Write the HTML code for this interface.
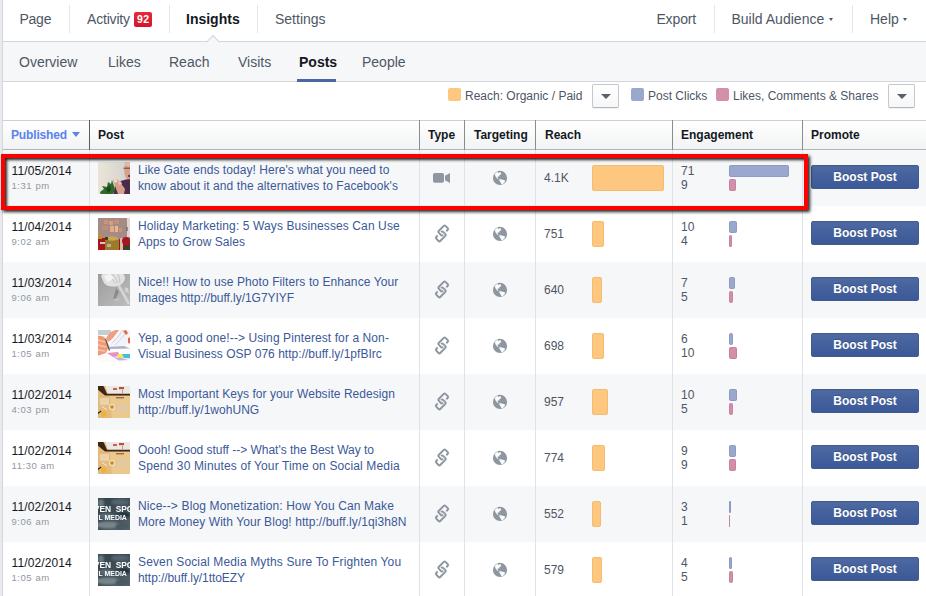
<!DOCTYPE html>
<html><head><meta charset="utf-8">
<style>
*{box-sizing:border-box;margin:0;padding:0}
html,body{width:926px;height:596px;overflow:hidden;background:#e9eaed;font-family:"Liberation Sans",Arial,sans-serif;}
.abs{position:absolute}
#wrap{position:absolute;left:2px;top:0;width:924px;height:596px;background:#fff;border-left:1px solid #d3d6db}
#page{position:absolute;left:0;top:0;width:926px;height:596px}
.nav{position:absolute;top:0;height:41px;line-height:38px;font-size:14px;color:#4e5665;white-space:nowrap}
.sep{position:absolute;top:5px;width:1px;height:28px;background:#e5e6e9}
.sub{position:absolute;top:43px;height:39px;line-height:39px;font-size:14px;color:#4e5665;white-space:nowrap}
.hd{position:absolute;top:122px;height:28px;line-height:27px;font-size:12px;font-weight:bold;color:#141823;white-space:nowrap}
.vl{position:absolute;width:1px;background:#e1e2e6}
.row{position:absolute;left:3px;width:923px;height:56px}
.row.odd{background:#f6f7f8}
.date{position:absolute;left:8.5px;top:14px;font-size:12px;line-height:14px;color:#141823;white-space:nowrap;letter-spacing:.12px}
.time{position:absolute;left:8.5px;top:30px;font-size:9.5px;line-height:12px;color:#9197a3;white-space:nowrap;letter-spacing:.55px}
.thumb{position:absolute;left:95px;top:12px;width:32px;height:32px;overflow:hidden}
.txt{position:absolute;left:135px;top:12px;font-size:12px;line-height:16px;color:#3b5998;white-space:nowrap}
.reach{position:absolute;left:541px;top:21px;font-size:12px;line-height:14px;color:#4e5665}
.obar{position:absolute;left:589px;top:15px;height:26px;background:#fdc780;border:1px solid #f6bc6e;border-radius:2px}
.eng{position:absolute;left:678px;top:14px;font-size:12px;line-height:14px;color:#4e5665}
.bbar{position:absolute;left:726px;top:15px;height:12px;background:#9ba8cd;border-radius:2px;box-shadow:inset 0 0 0 1px rgba(40,60,120,.12)}
.pbar{position:absolute;left:726px;top:29px;height:12px;background:#d48fa9;border-radius:2px;box-shadow:inset 0 0 0 1px rgba(120,30,70,.12)}
.btn{position:absolute;left:808px;top:15px;width:108px;height:24px;border:1px solid #435a8b;border-radius:2px;background:linear-gradient(#4e69a2,#3b5998);color:#fff;font-weight:bold;font-size:12px;line-height:22px;text-align:center;text-shadow:0 -1px 0 rgba(0,0,0,.2)}
.ico{position:absolute}
.lg{position:absolute;top:89px;font-size:12px;line-height:14px;color:#4e5665;white-space:nowrap}
.dd{position:absolute;top:84px;width:27px;height:24px;border:1px solid #c6c7ca;border-bottom-color:#b4b5b8;border-radius:2px;background:linear-gradient(#fff,#f6f7f8);box-shadow:0 1px 0 rgba(0,0,0,.05)}
.dd i{position:absolute;left:7.6px;top:9px;width:0;height:0;border-left:5px solid transparent;border-right:5px solid transparent;border-top:5.5px solid #596070}
</style></head><body>
<svg width="0" height="0" style="position:absolute"><defs>
<filter id="bl" x="-10%" y="-10%" width="120%" height="120%"><feGaussianBlur stdDeviation="0.7"/></filter>
<filter id="bl2" x="-10%" y="-10%" width="120%" height="120%"><feGaussianBlur stdDeviation="1.1"/></filter>
<linearGradient id="g1" x1="0" x2="1" y1="0" y2="0"><stop offset="0" stop-color="#ebe5d8"/><stop offset="1" stop-color="#d3d1cd"/></linearGradient>
<g id="t1"><rect width="32" height="32" fill="url(#g1)"/><g filter="url(#bl)">
<ellipse cx="30.5" cy="8" rx="4.3" ry="10" fill="#d6a08a"/>
<ellipse cx="30.5" cy="1.5" rx="3.5" ry="3" fill="#e4b8a2"/>
<rect x="25.5" y="5.6" width="6.5" height="1.3" fill="#6e5e5c"/>
<ellipse cx="31.5" cy="14" rx="1.4" ry="1.2" fill="#5a3030"/>
<path d="M15 33 L17 24 Q22 17 33 17 V33 Z" fill="#4b2c4c"/>
<path d="M15 18 Q19 16 22 20 L27 27 L26 32 L20 32 Q17 24 15 18 Z" fill="#d7a08a"/>
<path d="M15.5 17.5 L18 17.5 L19.5 20 L17 20.5Z" fill="#f4e4dc"/>
<path d="M20 20 L23 19.5 L24 22 L21 23Z" fill="#e8c0b0"/>
<path d="M2 30 L6 27 L4 24 L9 25 L10 20 L13 22 L14 18 L16 24 L17 28 L14 33 L3 33 Z" fill="#2d6a2b"/>
<path d="M8 27 L12 23 L13 28 L10 31Z" fill="#1c4a1a"/>
</g></g>
<g id="t2"><rect width="32" height="32" fill="#a68a84"/><g filter="url(#bl)">
<rect x="29" y="0" width="4" height="19" fill="#ddd6d2"/><rect x="28.5" y="9" width="1" height="4" fill="#5a4a48"/>
<rect x="6" y="2" width="4" height="4" fill="#c9957a"/><rect x="11" y="3" width="4" height="4" fill="#d6a080"/><rect x="16" y="2" width="5" height="4" fill="#c4907a"/>
<rect x="4" y="8" width="6" height="4" fill="#bf8c74"/><rect x="12" y="8" width="4" height="6" fill="#e4ac86"/><rect x="17" y="8" width="3" height="6" fill="#eab890"/><rect x="21" y="10" width="3" height="4" fill="#c8957a"/>
<rect x="-1" y="20" width="9" height="13" fill="#a8141a"/><rect x="-1" y="16" width="5" height="5" fill="#b89038"/>
<rect x="7" y="22" width="14" height="11" fill="#9c7a2a"/><ellipse cx="14" cy="20.5" rx="6" ry="2.2" fill="#c8a850"/>
<rect x="7" y="19" width="3" height="3" fill="#4a3a20"/>
<rect x="21" y="21" width="12" height="12" fill="#98141c"/><rect x="22" y="20" width="3" height="12" fill="#d8bcb4"/><circle cx="28" cy="23" r="4" fill="#a81522"/><path d="M26 28 L33 27 V33 H27Z" fill="#2a4a2a"/>
<rect x="9" y="26" width="4" height="3" fill="#b8b0a0"/><rect x="2" y="24" width="5" height="2" fill="#d0c8c0"/>
</g></g>
<linearGradient id="g3" x1="0" x2="1" y1="0" y2="1"><stop offset="0" stop-color="#9c9c9c"/><stop offset="1" stop-color="#bdbdbd"/></linearGradient>
<g id="t3"><rect width="32" height="32" fill="url(#g3)"/><g filter="url(#bl)">
<path d="M3 2 Q6 -3 16 -2 Q27 -3 27 4 Q26 10 20 12 Q10 14 6 9 Z" fill="#e2e2e2"/>
<path d="M8 1 Q14 3 18 10 M14 0 Q18 4 20 9 M20 0 Q22 4 22 9" stroke="#c4c4c4" stroke-width="1" fill="none"/>
<path d="M6 3 Q8 0 12 0 L16 4 L10 8Z" fill="#f4f4f4"/>
<path d="M19 11 L22 11 L32 29 L30 31 Z" fill="#d6d6d6"/>
<path d="M18 14 L21 18 L17 26 L15 26 Z" fill="#8a8a8a"/>
<path d="M15 25 L22 24 L20 27 L16 27Z" fill="#c0c0c0"/>
<path d="M26.5 13.5 L30 14 L31 19 L27 18Z" fill="#d2d2d2"/>
</g></g>
<g id="t4"><rect width="32" height="32" fill="#fbfbfc"/><g filter="url(#bl)">
<rect x="-1" y="-1" width="14" height="6" fill="#c6ced4"/>
<path d="M-1 6 Q5 5 8 9 L11 16 L8 23 L-1 26 Z" fill="#ee9a78"/>
<path d="M0 10 L7 12 M0 15 L8 17 M0 20 L7 21" stroke="#f8c4a8" stroke-width="1.6"/>
<path d="M8 8 Q12 0 22 -1 L18 4 Q14 10 10 12 Z" fill="#eea080"/>
<path d="M10 16 Q18 8 24 -1 L34 -1 L34 6 Q28 16 24 18 Q16 18 10 18 Z" fill="#f2f2f7"/>
<path d="M14 13 Q20 8 25 0 M17 15 Q24 9 28 2" stroke="#c8cce0" stroke-width=".8" fill="none"/>
<path d="M10 17 L26 16 L32 18.5 L12 19Z" fill="#aab2ca"/>
<path d="M25 1 L28 0 L30 3 L28 5Z M30 8 L33 7 L33 14 L30 13Z" fill="#e46a4a"/>
<path d="M7 9 L8 9 L12 20 L11 21Z" fill="#5a4a48"/>
<path d="M9 23 L20 22 L22 26 L15 27 Z" fill="#e890c0"/>
<path d="M19 24.5 L25 24 L26 28 L21 28.5Z" fill="#f2ea50"/>
<path d="M24 24 L34 24 L34 28.5 L26 28Z" fill="#48bce6"/>
<path d="M15 27 L24 28 L30 30 L21 30.5Z" fill="#c4b0e0"/>
</g></g>
<g id="t5"><rect width="32" height="32" fill="#e4ba7a"/><g filter="url(#bl)">
<path d="M12 10 H33 V33 H14 Z" fill="#ebc88e"/>
<path d="M7 -1 H33 V8.6 H10 Z" fill="#ebe7e3"/>
<path d="M-1 -1 H5 L9 7.8 H33 V9.6 H7 L-1 3 Z" fill="#3c2619"/>
<rect x="15" y="2" width="4" height="2" fill="#c8644a"/><rect x="21" y="1" width="5" height="2.2" fill="#b8503a"/><rect x="24" y="4" width="1" height="3" fill="#d89078"/>
<rect x="2" y="12" width="9" height="7" fill="#ead2ac"/>
<rect x="18" y="11" width="8" height="1.4" fill="#9a6a40"/>
<circle cx="14" cy="21" r="3.2" fill="#f1dab4"/><circle cx="14" cy="21" r="1.7" fill="#c88428"/>
<rect x="17.5" y="18.5" width="13" height="6" rx="1" fill="#e2c8a4"/>
<path d="M3 26 L7.5 25 L8.5 30 L4 31.5Z" fill="#e9b538"/>
<path d="M-1 27 L3 24.5 L3.5 25.5 L-1 29Z" fill="#3a2a20"/>
<path d="M4 20 L9 23 L8.5 24 L3.5 21Z" fill="#f0e0c0"/>
</g></g>
<linearGradient id="g6" x1="0" x2="1" y1="0" y2="1"><stop offset="0" stop-color="#33434c"/><stop offset=".5" stop-color="#3e4d56"/><stop offset="1" stop-color="#56646c"/></linearGradient>
<g id="t6"><rect width="32" height="32" fill="url(#g6)"/><g filter="url(#bl2)">
<ellipse cx="22" cy="4" rx="9" ry="3" fill="#55656e"/><ellipse cx="3" cy="5" rx="3" ry="4" fill="#6a7a80"/>
<ellipse cx="10" cy="27" rx="12" ry="3.5" fill="#78868c"/><ellipse cx="8" cy="18" rx="8" ry="3" fill="#5a6a72"/><ellipse cx="26" cy="17" rx="6" ry="3" fill="#26343c"/><ellipse cx="24" cy="28" rx="7" ry="3" fill="#4a5860"/>
</g>
<g filter="url(#bl3)"><text x="-4.2" y="14.2" font-family="Liberation Sans, Arial, sans-serif" font-weight="bold" font-size="8.4" fill="#fff" xml:space="preserve">VEN  SPOO</text>
<text x="0.6" y="22.3" font-family="Liberation Sans, Arial, sans-serif" font-weight="bold" font-size="6.9" fill="#fff" xml:space="preserve">L MEDIA</text></g></g>
<filter id="bl3" x="-10%" y="-10%" width="120%" height="120%"><feGaussianBlur stdDeviation="0.25"/></filter>
<g id="video" fill="#8e96a1"><rect x="3" y="7" width="11" height="9.8" rx="1.8"/><path d="M15 9.7 L20 7 V17 L15 14.2 Z"/></g>
<g id="globe"><circle cx="12" cy="11.9" r="7.05" fill="#8e96a1"/><path d="M6.6 8 L9.6 5.6 L10.6 7 L12.6 6.1 L13.2 8 L11.2 9.5 L11.6 10.6 L9.6 10.6 L9.6 11.8 L10.6 12.8 L9.2 12.8 L7.6 10.6 Z M10.8 13.6 L13 13.2 L16.6 14.2 L17.1 15.4 L15.2 17.8 L13.6 18.4 L12.6 16.4 Z" fill="#fafbfb"/></g>
<g id="link" fill="none" stroke="#8e96a1" stroke-width="2" stroke-linecap="butt">
<path id="lk" d="M1.6 2.8 H3.6 Q4.8 2.8 4.8 1.6 V-1.6 Q4.8 -2.8 3.6 -2.8 H-3.6 Q-4.8 -2.8 -4.8 -1.6 V1.6 Q-4.8 2.8 -3.6 2.8 H-3.2" transform="translate(13.2 9.4) rotate(-45)"/>
<path d="M1.6 2.8 H3.6 Q4.8 2.8 4.8 1.6 V-1.6 Q4.8 -2.8 3.6 -2.8 H-3.6 Q-4.8 -2.8 -4.8 -1.6 V1.6 Q-4.8 2.8 -3.6 2.8 H-3.2" transform="translate(10.8 15.4) rotate(135)"/>
</g>
</defs></svg>
<div id="wrap"></div>
<div id="page">
<!-- top nav -->
<div class="abs" style="left:3px;top:41px;width:923px;height:1px;background:#d3d6db"></div>
<div class="nav" style="left:19.5px;letter-spacing:-.25px">Page</div>
<div class="sep" style="left:69px"></div>
<div class="nav" style="left:87px;letter-spacing:-.18px">Activity</div>
<div class="abs" style="left:134px;top:12px;width:18px;height:15px;border-radius:2px;background:linear-gradient(#e6293b,#d3152a);color:#fff;font-size:10.5px;font-weight:bold;line-height:15px;text-align:center;letter-spacing:.4px;padding-left:.4px">92</div>
<div class="sep" style="left:169px"></div>
<div class="nav" style="left:186px;font-weight:bold;color:#141823">Insights</div>
<div class="sep" style="left:257px"></div>
<div class="nav" style="left:275px">Settings</div>
<div class="nav" style="left:656.4px;letter-spacing:-.12px">Export</div>
<div class="sep" style="left:714px"></div>
<div class="nav" style="left:731.4px;letter-spacing:.02px">Build Audience</div>
<div class="sep" style="left:852px"></div>
<div class="nav" style="left:870px">Help</div>
<div class="abs" style="left:828.8px;top:18.2px;width:0;height:0;border-left:2.8px solid transparent;border-right:2.8px solid transparent;border-top:3.6px solid #4e5665"></div>
<div class="abs" style="left:903.1px;top:18.2px;width:0;height:0;border-left:2.8px solid transparent;border-right:2.8px solid transparent;border-top:3.6px solid #4e5665"></div>
<!-- sub nav -->
<div class="abs" style="left:3px;top:42px;width:923px;height:39px;background:#f6f7f8"></div>
<div class="abs" style="left:3px;top:81px;width:923px;height:1px;background:#d3d6db"></div>
<div class="abs" style="left:208px;top:36.6px;width:10px;height:10px;transform:rotate(45deg);background:#f6f7f8;border-left:1px solid #d3d6db;border-top:1px solid #d3d6db"></div>
<div class="sub" style="left:19px">Overview</div>
<div class="sub" style="left:108px">Likes</div>
<div class="sub" style="left:169px">Reach</div>
<div class="sub" style="left:238px">Visits</div>
<div class="sub" style="left:299px;font-weight:bold;color:#141823">Posts</div>
<div class="abs" style="left:297px;top:79px;width:39px;height:3px;background:#4b67a1"></div>
<div class="sub" style="left:362px">People</div>
<!-- legend -->
<div class="abs" style="left:448px;top:88px;width:13px;height:13px;border-radius:2px;background:#fdc780"></div>
<div class="lg" style="left:465px">Reach: Organic / Paid</div>
<div class="dd" style="left:592px"><i></i></div>
<div class="abs" style="left:631px;top:88px;width:13px;height:13px;border-radius:2px;background:#9ba8cd"></div>
<div class="lg" style="left:648px">Post Clicks</div>
<div class="abs" style="left:716px;top:88px;width:13px;height:13px;border-radius:2px;background:#d48fa9"></div>
<div class="lg" style="left:733px">Likes, Comments &amp; Shares</div>
<div class="dd" style="left:888px"><i></i></div>
<!-- header -->
<div class="abs" style="left:3px;top:120px;width:923px;height:30px;background:linear-gradient(#fff,#f2f3f4);border-top:1px solid #cfcfcf;border-bottom:1px solid #b5b5b5"></div>
<div class="hd" style="left:11px;color:#5a82f0;letter-spacing:-.15px">Published</div>
<div class="abs" style="left:72px;top:132px;width:0;height:0;border-left:4px solid transparent;border-right:4px solid transparent;border-top:5px solid #5a82f0"></div>
<div class="hd" style="left:98px">Post</div>
<div class="hd" style="left:428px">Type</div>
<div class="hd" style="left:474px">Targeting</div>
<div class="hd" style="left:545px">Reach</div>
<div class="hd" style="left:681px">Engagement</div>
<div class="hd" style="left:811px">Promote</div>

<div class="row odd" style="top:150px">
<div class="date">11/05/2014</div><div class="time">1:31 pm</div>
<svg class="thumb" width="32" height="32" viewBox="0 0 32 32"><use href="#t1"/></svg>
<div class="txt"><span style="letter-spacing:0.052px">Like Gate ends today! Here's what you need to</span><br><span style="letter-spacing:0.075px">know about it and the alternatives to Facebook's</span></div>
<svg class="ico" style="left:427px;top:16px" width="24" height="24"><use href="#video"/></svg>
<svg class="ico" style="left:485px;top:16px" width="24" height="24"><use href="#globe"/></svg>
<div class="reach">4.1K</div><div class="obar" style="width:72px"></div>
<div class="eng">71<br>9</div><div class="bbar" style="width:60px"></div><div class="pbar" style="width:7px"></div>
<div class="btn">Boost Post</div>
</div>
<div class="row" style="top:206px">
<div class="date">11/04/2014</div><div class="time">9:02 am</div>
<svg class="thumb" width="32" height="32" viewBox="0 0 32 32"><use href="#t2"/></svg>
<div class="txt"><span style="letter-spacing:0.109px">Holiday Marketing: 5 Ways Businesses Can Use</span><br><span style="letter-spacing:0.055px">Apps to Grow Sales</span></div>
<svg class="ico" style="left:427px;top:15px" width="24" height="24"><use href="#link"/></svg>
<svg class="ico" style="left:485px;top:16px" width="24" height="24"><use href="#globe"/></svg>
<div class="reach">751</div><div class="obar" style="width:12px"></div>
<div class="eng">10<br>4</div><div class="bbar" style="width:8px"></div><div class="pbar" style="width:3px"></div>
<div class="btn">Boost Post</div>
</div>
<div class="row odd" style="top:262px">
<div class="date">11/03/2014</div><div class="time">9:06 am</div>
<svg class="thumb" width="32" height="32" viewBox="0 0 32 32"><use href="#t3"/></svg>
<div class="txt"><span style="letter-spacing:0.088px">Nice!! How to use Photo Filters to Enhance Your</span><br><span style="letter-spacing:-0.039px">Images http://buff.ly/1G7YIYF</span></div>
<svg class="ico" style="left:427px;top:15px" width="24" height="24"><use href="#link"/></svg>
<svg class="ico" style="left:485px;top:16px" width="24" height="24"><use href="#globe"/></svg>
<div class="reach">640</div><div class="obar" style="width:10px"></div>
<div class="eng">7<br>5</div><div class="bbar" style="width:6px"></div><div class="pbar" style="width:4px"></div>
<div class="btn">Boost Post</div>
</div>
<div class="row" style="top:318px">
<div class="date">11/03/2014</div><div class="time">1:05 am</div>
<svg class="thumb" width="32" height="32" viewBox="0 0 32 32"><use href="#t4"/></svg>
<div class="txt"><span style="letter-spacing:0.093px">Yep, a good one!--&gt; Using Pinterest for a Non-</span><br><span style="letter-spacing:0.022px">Visual Business OSP 076 http://buff.ly/1pfBIrc</span></div>
<svg class="ico" style="left:427px;top:15px" width="24" height="24"><use href="#link"/></svg>
<svg class="ico" style="left:485px;top:16px" width="24" height="24"><use href="#globe"/></svg>
<div class="reach">698</div><div class="obar" style="width:12px"></div>
<div class="eng">6<br>10</div><div class="bbar" style="width:4px"></div><div class="pbar" style="width:8px"></div>
<div class="btn">Boost Post</div>
</div>
<div class="row odd" style="top:374px">
<div class="date">11/02/2014</div><div class="time">4:03 pm</div>
<svg class="thumb" width="32" height="32" viewBox="0 0 32 32"><use href="#t5"/></svg>
<div class="txt"><span style="letter-spacing:0.055px">Most Important Keys for your Website Redesign</span><br><span style="letter-spacing:0.033px">http://buff.ly/1wohUNG</span></div>
<svg class="ico" style="left:427px;top:15px" width="24" height="24"><use href="#link"/></svg>
<svg class="ico" style="left:485px;top:16px" width="24" height="24"><use href="#globe"/></svg>
<div class="reach">957</div><div class="obar" style="width:16px"></div>
<div class="eng">10<br>5</div><div class="bbar" style="width:8px"></div><div class="pbar" style="width:4px"></div>
<div class="btn">Boost Post</div>
</div>
<div class="row" style="top:430px">
<div class="date">11/02/2014</div><div class="time">11:30 am</div>
<svg class="thumb" width="32" height="32" viewBox="0 0 32 32"><use href="#t5"/></svg>
<div class="txt"><span style="letter-spacing:-0.017px">Oooh! Good stuff --&gt; What's the Best Way to</span><br><span style="letter-spacing:0.139px">Spend 30 Minutes of Your Time on Social Media</span></div>
<svg class="ico" style="left:427px;top:15px" width="24" height="24"><use href="#link"/></svg>
<svg class="ico" style="left:485px;top:16px" width="24" height="24"><use href="#globe"/></svg>
<div class="reach">774</div><div class="obar" style="width:13px"></div>
<div class="eng">9<br>9</div><div class="bbar" style="width:7px"></div><div class="pbar" style="width:7px"></div>
<div class="btn">Boost Post</div>
</div>
<div class="row odd" style="top:486px">
<div class="date">11/02/2014</div><div class="time">9:06 am</div>
<svg class="thumb" width="32" height="32" viewBox="0 0 32 32"><use href="#t6"/></svg>
<div class="txt"><span style="letter-spacing:0.145px">Nice--&gt; Blog Monetization: How You Can Make</span><br><span style="letter-spacing:0.065px">More Money With Your Blog! http://buff.ly/1qi3h8N</span></div>
<svg class="ico" style="left:427px;top:15px" width="24" height="24"><use href="#link"/></svg>
<svg class="ico" style="left:485px;top:16px" width="24" height="24"><use href="#globe"/></svg>
<div class="reach">552</div><div class="obar" style="width:9px"></div>
<div class="eng">3<br>1</div><div class="bbar" style="width:2px"></div><div class="pbar" style="width:1px"></div>
<div class="btn">Boost Post</div>
</div>
<div class="row" style="top:542px">
<div class="date">11/02/2014</div><div class="time">1:05 am</div>
<svg class="thumb" width="32" height="32" viewBox="0 0 32 32"><use href="#t6"/></svg>
<div class="txt"><span style="letter-spacing:0.148px">Seven Social Media Myths Sure To Frighten You</span><br><span style="letter-spacing:-0.072px">http://buff.ly/1ttoEZY</span></div>
<svg class="ico" style="left:427px;top:15px" width="24" height="24"><use href="#link"/></svg>
<svg class="ico" style="left:485px;top:16px" width="24" height="24"><use href="#globe"/></svg>
<div class="reach">579</div><div class="obar" style="width:10px"></div>
<div class="eng">4<br>5</div><div class="bbar" style="width:3px"></div><div class="pbar" style="width:4px"></div>
<div class="btn">Boost Post</div>
</div>
<div class="vl" style="left:89px;top:150px;height:446px"></div>
<div class="vl" style="left:89px;top:120px;height:30px;background:#5c5c5c"></div>
<div class="vl" style="left:419px;top:150px;height:446px"></div>
<div class="vl" style="left:419px;top:120px;height:30px;background:#8c8c8c"></div>
<div class="vl" style="left:464px;top:150px;height:446px"></div>
<div class="vl" style="left:464px;top:120px;height:30px;background:#8c8c8c"></div>
<div class="vl" style="left:535px;top:150px;height:446px"></div>
<div class="vl" style="left:535px;top:120px;height:30px;background:#8c8c8c"></div>
<div class="vl" style="left:672px;top:150px;height:446px"></div>
<div class="vl" style="left:672px;top:120px;height:30px;background:#8c8c8c"></div>
<div class="vl" style="left:802px;top:150px;height:446px"></div>
<div class="vl" style="left:802px;top:120px;height:30px;background:#8c8c8c"></div>
<div class="abs" id="red" style="left:1px;top:154px;width:807px;height:56px;border:4px solid #fe0000;box-shadow:2px 2px 3px rgba(0,0,0,.85), inset 2px 2px 3px rgba(0,0,0,.85)"></div>
</div>
</body></html>
